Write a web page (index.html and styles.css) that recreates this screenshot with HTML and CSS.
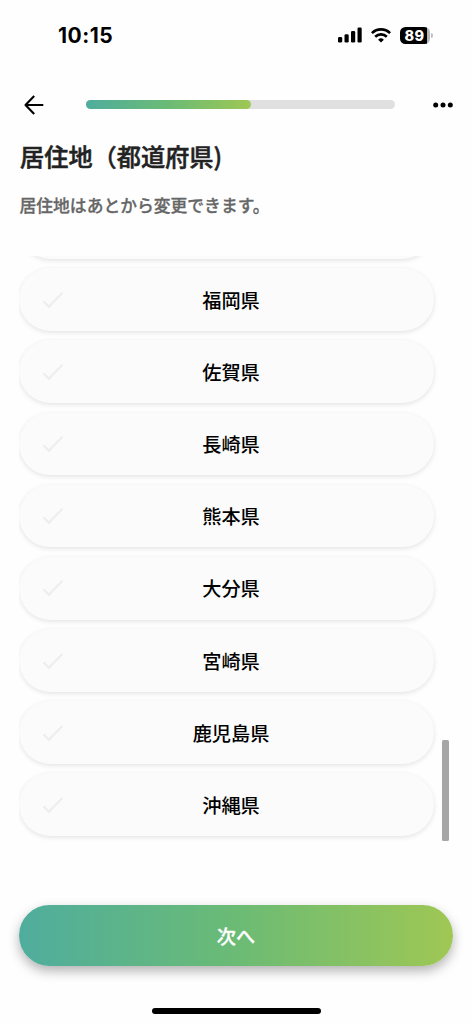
FILE: index.html
```html
<!DOCTYPE html>
<html lang="ja">
<head>
<meta charset="utf-8">
<meta name="viewport" content="width=device-width, initial-scale=1">
<title>居住地</title>
<link rel="stylesheet" href="styles.css">
</head>
<body>
<div class="screen">
  <div class="status">
    <span class="time">10:15</span>
    <div class="status-icons">
      <svg class="signal" width="25" height="16" viewBox="0 0 25 16"><rect x="0" y="10" width="4.2" height="5.6" rx="1.3"/><rect x="6.5" y="7.3" width="4.2" height="8.3" rx="1.3"/><rect x="13" y="4" width="4.2" height="11.6" rx="1.3"/><rect x="19.5" y="0.5" width="4.2" height="15.1" rx="1.3"/></svg>
      <svg class="wifi" width="20" height="15" viewBox="0 0 20 15"><g fill="none" stroke="#000" stroke-width="2.6"><path d="M.9 5.1a13 13 0 0 1 18.2 0"/><path d="M4.2 8.7a8.3 8.3 0 0 1 11.6 0"/></g><path d="M10 14.6l-2.9-2.9a4.2 4.2 0 0 1 5.8 0z"/></svg>
      <div class="battery"><span class="battery-body">89</span><span class="battery-cap"></span></div>
    </div>
  </div>
  <header class="nav">
    <svg class="back" width="20" height="20" viewBox="0 0 20 20"><path d="M10.2 1L1.5 10l8.7 9M1.5 10h17.8" fill="none" stroke="#000" stroke-width="2.1" stroke-linejoin="round"/></svg>
    <div class="progress"><div class="progress-fill"></div></div>
    <svg class="more" width="20" height="6" viewBox="0 0 20 6"><circle cx="2.7" cy="3" r="2.5"/><circle cx="10" cy="3" r="2.5"/><circle cx="17.3" cy="3" r="2.5"/></svg>
  </header>
  <h1 class="title">居住地（都道府県)</h1>
  <p class="note">居住地はあとから変更できます。</p>
  <main class="list-area">
    <div class="list">
      <div class="option"></div>
      <div class="option"><svg class="check" viewBox="0 0 22 18"><path d="M1.5 10.2l5.3 5.6L20.5 1.8"/></svg>福岡県</div>
      <div class="option"><svg class="check" viewBox="0 0 22 18"><path d="M1.5 10.2l5.3 5.6L20.5 1.8"/></svg>佐賀県</div>
      <div class="option"><svg class="check" viewBox="0 0 22 18"><path d="M1.5 10.2l5.3 5.6L20.5 1.8"/></svg>長崎県</div>
      <div class="option"><svg class="check" viewBox="0 0 22 18"><path d="M1.5 10.2l5.3 5.6L20.5 1.8"/></svg>熊本県</div>
      <div class="option"><svg class="check" viewBox="0 0 22 18"><path d="M1.5 10.2l5.3 5.6L20.5 1.8"/></svg>大分県</div>
      <div class="option"><svg class="check" viewBox="0 0 22 18"><path d="M1.5 10.2l5.3 5.6L20.5 1.8"/></svg>宮崎県</div>
      <div class="option"><svg class="check" viewBox="0 0 22 18"><path d="M1.5 10.2l5.3 5.6L20.5 1.8"/></svg>鹿児島県</div>
      <div class="option"><svg class="check" viewBox="0 0 22 18"><path d="M1.5 10.2l5.3 5.6L20.5 1.8"/></svg>沖縄県</div>
    </div>
    <div class="scrollbar"></div>
  </main>
  <button class="next">次へ</button>
  <div class="home-bar"></div>
</div>
</body>
</html>
```
FILE: styles.css
```css
* {
  box-sizing: border-box;
}

body {
  margin: 0;
  background: #fefefe;
  font-family: "Noto Sans CJK JP", sans-serif;
}

.screen {
  display: flex;
  flex-direction: column;
  width: 472px;
  height: 1024px;
  overflow: hidden;
}

.status {
  display: flex;
  align-items: center;
  justify-content: space-between;
  height: 70px;
  flex: none;
  padding: 0 39px 0 58px;
}

.time {
  font: 700 21px/24px Inter, sans-serif;
  letter-spacing: 0.5px;
  padding-top: 1px;
}

.status-icons {
  display: flex;
  align-items: center;
}

.wifi {
  margin: 0 9px 0 8px;
}

.battery {
  display: flex;
  align-items: center;
  gap: 1px;
}

.battery-body {
  width: 30px;
  height: 17px;
  border-radius: 5.5px;
  padding-right: 1px;
  background: linear-gradient(90deg, #000 27px, #b5b5b5 27px);
  color: #fff;
  font: 800 14.5px/17px Inter, sans-serif;
  letter-spacing: 0.3px;
  text-align: center;
}

.battery-cap {
  width: 2px;
  height: 5px;
  border-radius: 0 2px 2px 0;
  background: #c0c0c0;
}

.nav {
  display: flex;
  align-items: center;
  height: 69px;
  flex: none;
  padding: 0 18px 0 24px;
}

.progress {
  width: 309px;
  height: 9px;
  margin: 0 38px 0 42px;
  border-radius: 5px;
  background: #e0e0e0;
}

.progress-fill {
  width: 165px;
  height: 9px;
  border-radius: 5px;
  background: linear-gradient(90deg, #4fad9d, #6bbb75 50%, #9fc754);
}

.title {
  margin: -1px 0 0 20px;
  color: #222;
  font-size: 24.2px;
  font-weight: 500;
  line-height: 36px;
  -webkit-text-stroke: 0.5px #222;
}

.note {
  margin: 18px 0 0 19.5px;
  color: #666;
  font-size: 16.8px;
  font-weight: 500;
  line-height: 26px;
  -webkit-text-stroke: 0.3px #666;
}

.list-area {
  display: flex;
  height: 586px;
  flex: none;
  margin: 38px 23px 0 19px;
}

.list {
  display: flex;
  flex-direction: column;
  justify-content: flex-end;
  gap: 9.3px;
  width: 423px;
  padding-bottom: 6.2px;
  overflow: hidden;
}

.option {
  display: grid;
  grid-template-columns: 66px 1fr 57px;
  align-items: center;
  flex: none;
  width: 415px;
  height: 62.8px;
  padding-top: 0.6px;
  border-radius: 32px;
  background: #fbfbfb;
  box-shadow: 0 1.5px 5px rgba(0, 0, 0, 0.11);
  color: #000;
  font-size: 19.2px;
  font-weight: 500;
  text-align: center;
}

.check {
  width: 22px;
  height: 18px;
  margin-left: 23px;
  fill: none;
  stroke: #edeef0;
  stroke-width: 2.2;
}

.scrollbar {
  width: 7px;
  height: 101px;
  align-self: flex-end;
  margin-bottom: 1px;
  border-radius: 1.5px;
  background: #a6a6a6;
}

.next {
  height: 61px;
  flex: none;
  margin: 63px 19px 0;
  border: 0;
  border-radius: 31px;
  background: linear-gradient(90deg, #4fad9d, #6bbb75 50%, #9fc754);
  box-shadow: 0 5px 12px rgba(0, 0, 0, 0.3);
  color: #fff;
  font: 500 19.2px/28px "Noto Sans CJK JP", sans-serif;
  -webkit-text-stroke: 0.3px #fff;
}

.home-bar {
  width: 169px;
  height: 6px;
  flex: none;
  margin: 42px auto 0;
  border-radius: 3px;
  background: #000;
}
```
